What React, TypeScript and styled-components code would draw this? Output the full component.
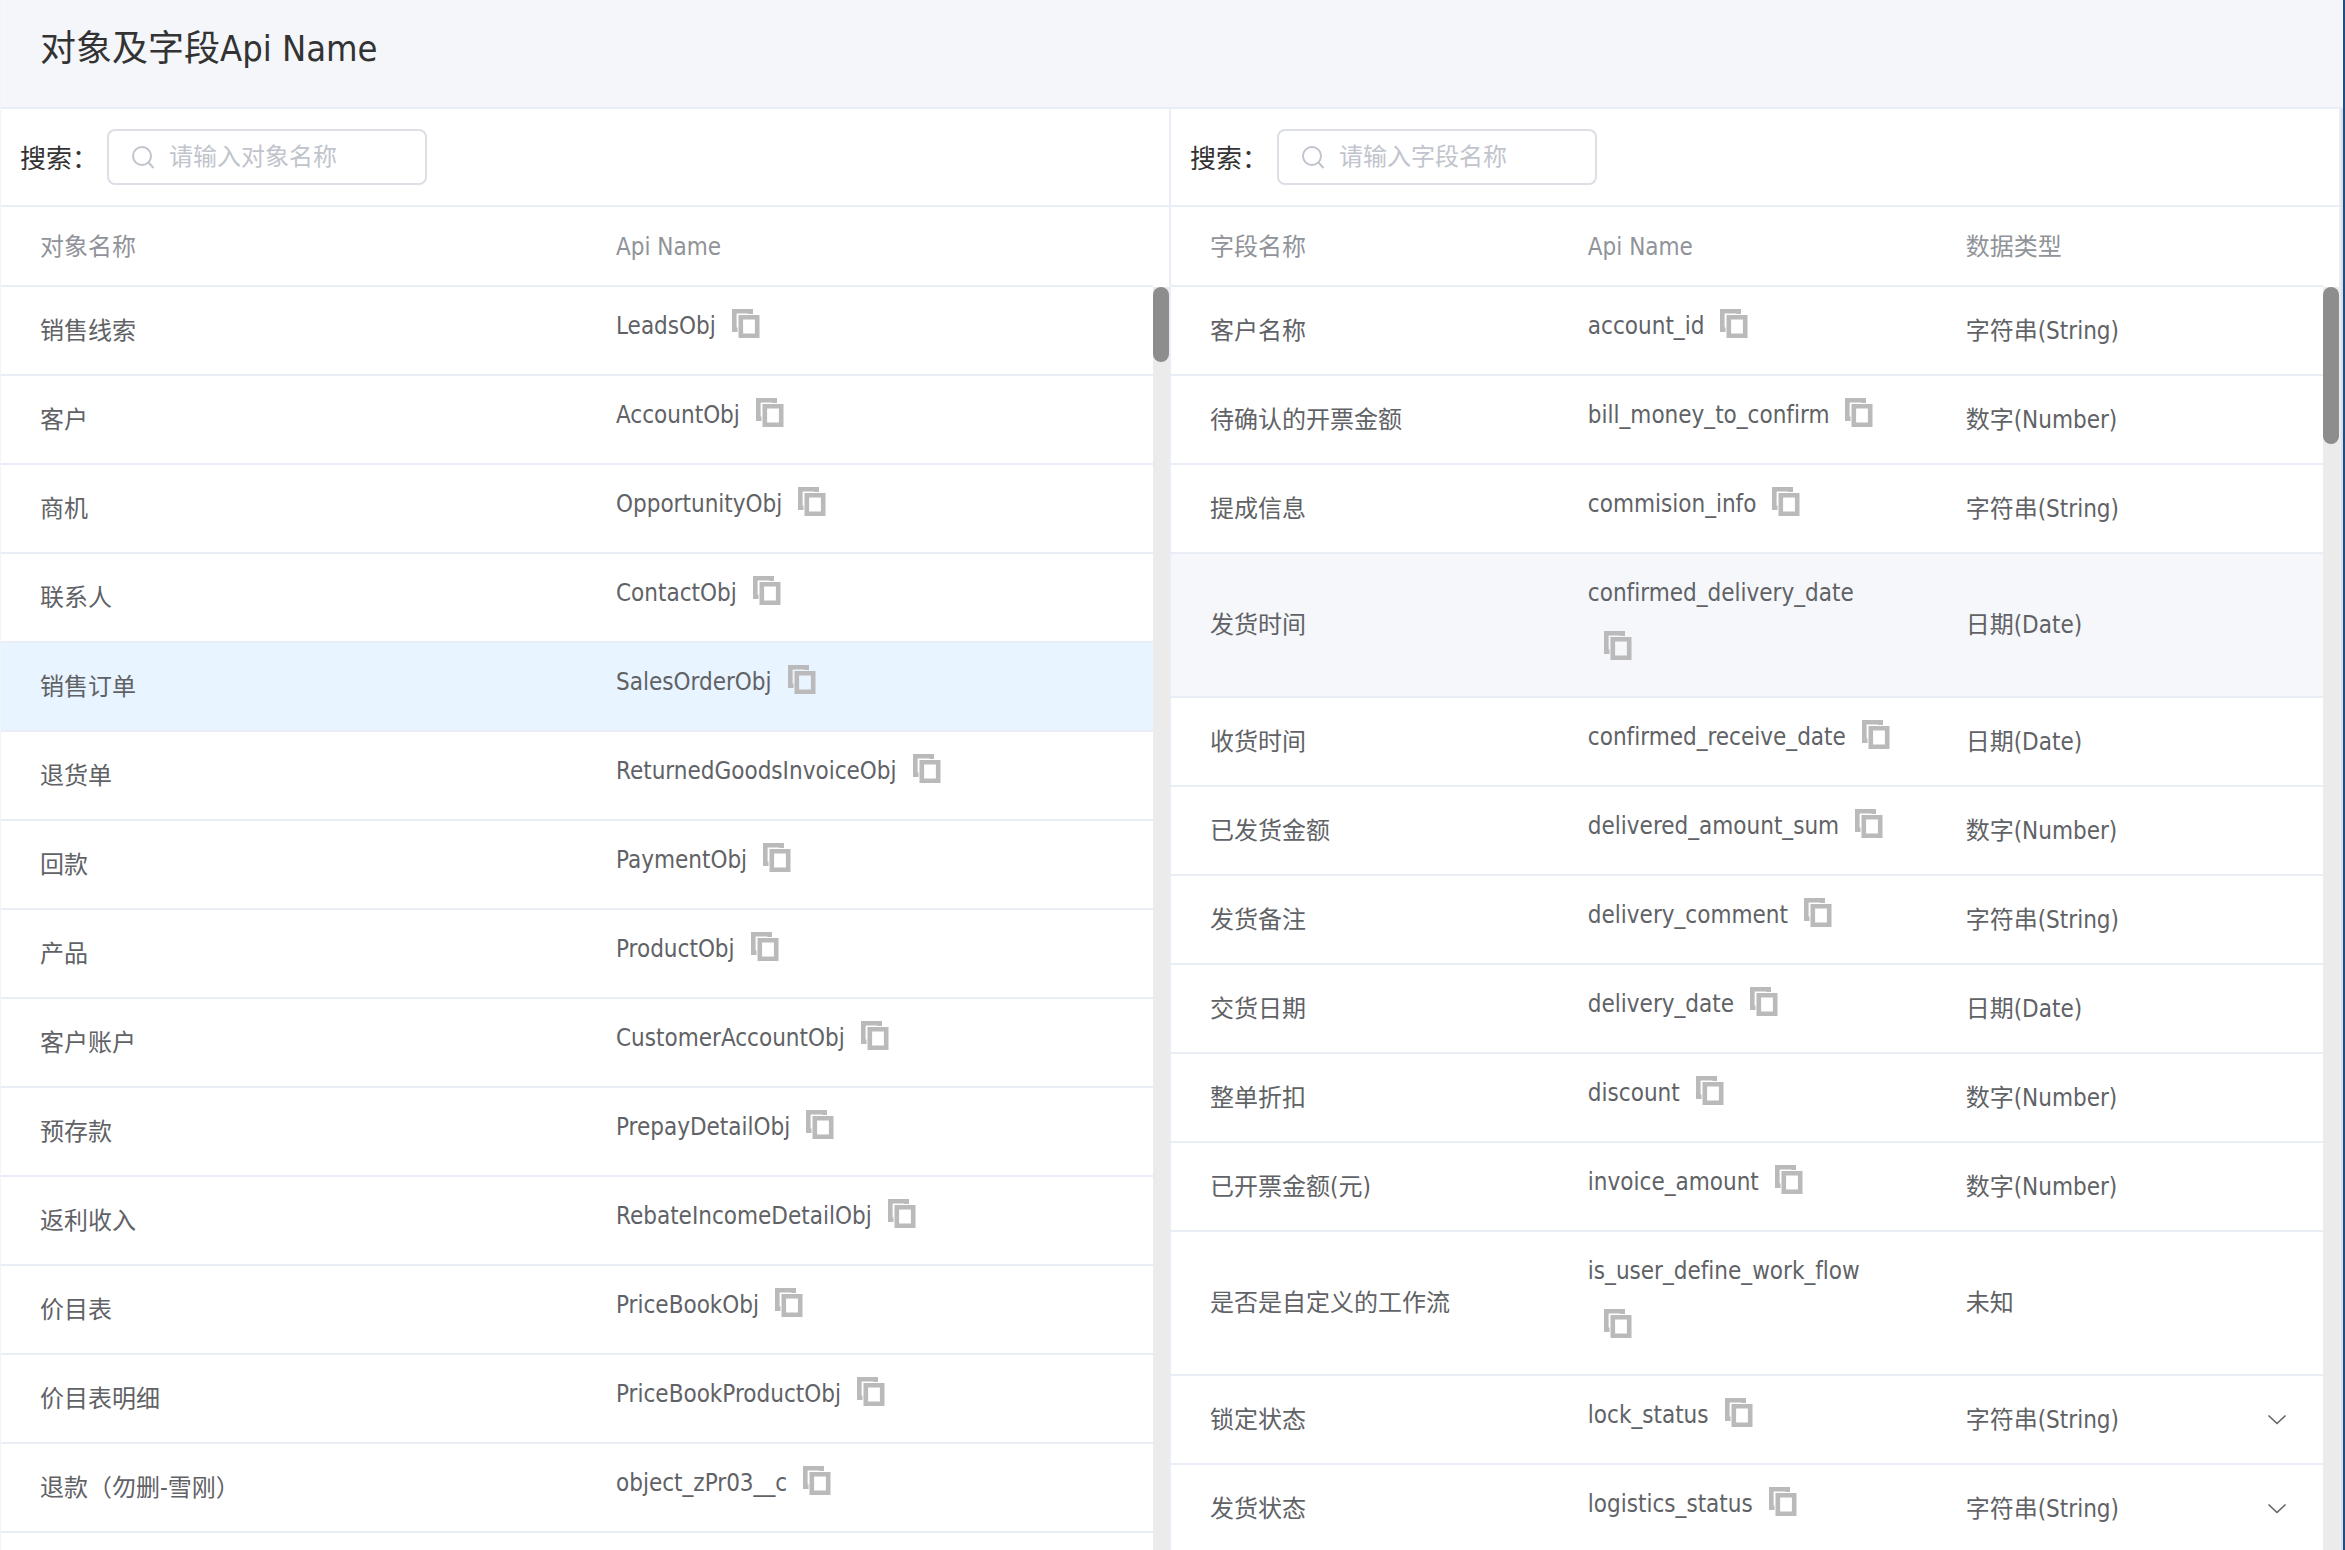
import React, { useState } from 'react';
import styled, { createGlobalStyle } from 'styled-components';

const LINE = '#e9edf6';

const GlobalStyle = createGlobalStyle`
  * {
    box-sizing: border-box;
  }
  html,
  body,
  #root {
    height: 100%;
    margin: 0;
  }
  body,
  button,
  input {
    font-family: 'DejaVu Sans Condensed', 'Noto Sans CJK SC', sans-serif;
    font-size: 24px;
    font-variant-ligatures: none;
  }
`;

const Page = styled.div`
  display: flex;
  flex-direction: column;
  height: 100vh;
  overflow: hidden;
  background: #fff;
  color: #606266;
  border-left: 1px solid #f3f4f6;
  border-right: 2px solid #1f4e8c;
`;

const Header = styled.header`
  flex: none;
  padding: 25px 39px 34px;
  background: #f4f6fa;
  border-bottom: 2px solid ${LINE};
`;

const Title = styled.h1`
  margin: 0;
  font-size: 36px;
  line-height: 48px;
  font-weight: 400;
  color: #333;
`;

const Panels = styled.main`
  flex: 1;
  min-height: 0;
  display: grid;
  grid-template-columns: 1fr 1fr;
  border-right: 2px solid #dde1d8;
`;

const Panel = styled.section`
  display: flex;
  flex-direction: column;
  min-width: 0;
  min-height: 0;
  border-right: 2px solid ${LINE};
`;

const SearchBar = styled.form`
  flex: none;
  display: flex;
  align-items: center;
  gap: 9px;
  height: 98px;
  padding: 0 19px;
  border-bottom: 2px solid ${LINE};
`;

const SearchLabel = styled.label`
  padding-bottom: 2px;
  font-size: 26px;
  color: #333;
`;

const SearchBox = styled.div`
  display: flex;
  align-items: center;
  gap: 14px;
  width: 320px;
  height: 56px;
  padding: 0 22px;
  border: 2px solid #dcdfe6;
  border-radius: 8px;
  color: #c0c4cc;
`;

const SearchInput = styled.input`
  flex: 1;
  min-width: 0;
  padding: 0;
  border: 0;
  outline: 0;
  background: transparent;
  color: #606266;
  &::placeholder {
    color: #c0c4cc;
    opacity: 1;
  }
`;

const Scroller = styled.div`
  flex: 1;
  min-height: 0;
  display: grid;
  grid-template-columns: 1fr 16px;
`;

const TableClip = styled.div`
  min-width: 0;
  overflow: hidden;
`;

const Table = styled.table`
  width: 100%;
  table-layout: fixed;
  border-collapse: separate;
  border-spacing: 0;
`;

const Column = styled.col<{ $width: string }>`
  width: ${(p) => p.$width};
`;

const HeadCell = styled.th`
  height: 80px;
  padding: 2px 0 0 39px;
  border-bottom: 2px solid ${LINE};
  font-weight: 400;
  line-height: 36px;
  text-align: left;
  color: #909399;
`;

const Row = styled.tr<{ $tone?: 'selected' | 'hover' }>`
  background: ${(p) => (p.$tone === 'selected' ? '#e8f4ff' : p.$tone === 'hover' ? '#f5f7fa' : '#fff')};
`;

const Cell = styled.td`
  height: 89px;
  padding: 0 0 0 39px;
  border-bottom: 2px solid ${LINE};
  line-height: 36px;
  vertical-align: middle;
`;

const ApiCell = styled(Cell)`
  padding: 12px 33px 20px 39px;
  line-height: 55px;
`;

const TypeLine = styled.div`
  display: flex;
  align-items: center;
  justify-content: space-between;
  padding-right: 36px;
`;

const IconButton = styled.button`
  display: inline-flex;
  padding: 0;
  border: 0;
  background: none;
  color: #606266;
  cursor: pointer;
`;

const CopyButton = styled(IconButton)`
  margin-left: 16px;
  vertical-align: -4px;
  color: #bababa;
`;

const Track = styled.div`
  margin-top: 80px;
  background: #ebebeb;
`;

const Thumb = styled.div<{ $share: number }>`
  height: ${(p) => p.$share}%;
  border-radius: 8px;
  background: #8d8d8d;
`;

const SearchIcon = () => (
  <svg width="24" height="24" viewBox="0 0 24 24" fill="none" stroke="currentColor" strokeWidth="2" aria-hidden="true">
    <circle cx="11" cy="11" r="9" />
    <path d="M17.5 17.5 22.5 23" />
  </svg>
);

const CopyIcon = () => (
  <svg width="28" height="29" viewBox="0 0 28 29" fill="none" stroke="currentColor" strokeWidth="4.6" aria-hidden="true">
    <path d="M5.5 20.7H2.3V2.3H18.7V5" />
    <path d="M8.8 8.3H25.2V26.7H8.8Z" />
  </svg>
);

const ChevronIcon = () => (
  <svg width="20" height="12" viewBox="0 0 20 12" fill="none" stroke="currentColor" strokeWidth="1.6" aria-hidden="true">
    <path d="M1.5 1.5 10 9.5 18.5 1.5" />
  </svg>
);

const objects: [string, string][] = [
  ['销售线索', 'LeadsObj'],
  ['客户', 'AccountObj'],
  ['商机', 'OpportunityObj'],
  ['联系人', 'ContactObj'],
  ['销售订单', 'SalesOrderObj'],
  ['退货单', 'ReturnedGoodsInvoiceObj'],
  ['回款', 'PaymentObj'],
  ['产品', 'ProductObj'],
  ['客户账户', 'CustomerAccountObj'],
  ['预存款', 'PrepayDetailObj'],
  ['返利收入', 'RebateIncomeDetailObj'],
  ['价目表', 'PriceBookObj'],
  ['价目表明细', 'PriceBookProductObj'],
  ['退款（勿删-雪刚）', 'object_zPr03__c'],
];

const fields: [string, string, string, boolean?][] = [
  ['客户名称', 'account_id', '字符串(String)'],
  ['待确认的开票金额', 'bill_money_to_confirm', '数字(Number)'],
  ['提成信息', 'commision_info', '字符串(String)'],
  ['发货时间', 'confirmed_delivery_date', '日期(Date)'],
  ['收货时间', 'confirmed_receive_date', '日期(Date)'],
  ['已发货金额', 'delivered_amount_sum', '数字(Number)'],
  ['发货备注', 'delivery_comment', '字符串(String)'],
  ['交货日期', 'delivery_date', '日期(Date)'],
  ['整单折扣', 'discount', '数字(Number)'],
  ['已开票金额(元)', 'invoice_amount', '数字(Number)'],
  ['是否是自定义的工作流', 'is_user_define_work_flow', '未知'],
  ['锁定状态', 'lock_status', '字符串(String)', true],
  ['发货状态', 'logistics_status', '字符串(String)', true],
];

const ApiName = ({ name }: { name: string }) => (
  <ApiCell>
    {name}
    <CopyButton type="button" aria-label={`复制 ${name}`} onClick={() => navigator.clipboard?.writeText(name)}>
      <CopyIcon />
    </CopyButton>
  </ApiCell>
);

type PanelProps = {
  id: string;
  placeholder: string;
  columns: { title: string; width: string }[];
  thumbShare: number;
  children: React.ReactNode;
};

const DataPanel = ({ id, placeholder, columns, thumbShare, children }: PanelProps) => (
  <Panel>
    <SearchBar onSubmit={(e) => e.preventDefault()}>
      <SearchLabel htmlFor={id}>搜索：</SearchLabel>
      <SearchBox>
        <SearchIcon />
        <SearchInput id={id} type="text" placeholder={placeholder} />
      </SearchBox>
    </SearchBar>
    <Scroller>
      <TableClip>
        <Table>
          <colgroup>
            {columns.map((c) => (
              <Column key={c.title} $width={c.width} />
            ))}
          </colgroup>
          <thead>
            <tr>
              {columns.map((c) => (
                <HeadCell key={c.title} scope="col">
                  {c.title}
                </HeadCell>
              ))}
            </tr>
          </thead>
          <tbody>{children}</tbody>
        </Table>
      </TableClip>
      <Track>
        <Thumb $share={thumbShare} />
      </Track>
    </Scroller>
  </Panel>
);

const objectColumns = [
  { title: '对象名称', width: '50%' },
  { title: 'Api Name', width: '50%' },
];

const fieldColumns = [
  { title: '字段名称', width: '32.8%' },
  { title: 'Api Name', width: '32.8%' },
  { title: '数据类型', width: 'auto' },
];

export default function App() {
  const [selected, setSelected] = useState('SalesOrderObj');
  return (
    <>
      <GlobalStyle />
      <Page>
        <Header>
          <Title>对象及字段Api Name</Title>
        </Header>
        <Panels>
          <DataPanel id="object-search" placeholder="请输入对象名称" columns={objectColumns} thumbShare={5.9}>
            {objects.map(([label, api]) => (
              <Row key={api} $tone={api === selected ? 'selected' : undefined} onClick={() => setSelected(api)}>
                <Cell>{label}</Cell>
                <ApiName name={api} />
              </Row>
            ))}
          </DataPanel>
          <DataPanel id="field-search" placeholder="请输入字段名称" columns={fieldColumns} thumbShare={12.4}>
            {fields.map(([label, api, type, expandable]) => (
              <Row key={api} $tone={api === 'confirmed_delivery_date' ? 'hover' : undefined}>
                <Cell>{label}</Cell>
                <ApiName name={api} />
                <Cell>
                  <TypeLine>
                    {type}
                    {expandable && (
                      <IconButton type="button" aria-label={`展开 ${label}`}>
                        <ChevronIcon />
                      </IconButton>
                    )}
                  </TypeLine>
                </Cell>
              </Row>
            ))}
          </DataPanel>
        </Panels>
      </Page>
    </>
  );
}
